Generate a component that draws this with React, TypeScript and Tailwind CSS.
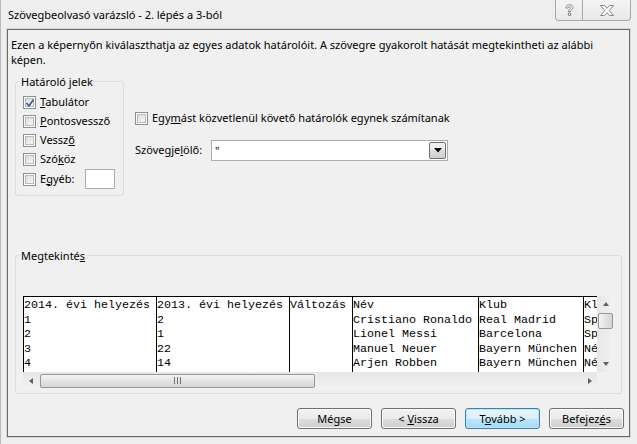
import React from "react";

const cols = [
  { w: "w-[133px]", lines: ["2014. évi helyezés", "1", "2", "3", "4"] },
  { w: "w-[133px]", lines: ["2013. évi helyezés", "2", "1", "22", "14"] },
  { w: "w-[63px]", lines: ["Változás", "", "", "", ""] },
  { w: "w-[126px]", lines: ["Név", "Cristiano Ronaldo", "Lionel Messi", "Manuel Neuer", "Arjen Robben"] },
  { w: "w-[105px]", lines: ["Klub", "Real Madrid", "Barcelona", "Bayern München", "Bayern München"] },
  { w: "w-[14px]", lines: ["Klub országa", "Spanyolország", "Spanyolország", "Németország", "Németország"] },
];

function Box({ checked }: { checked?: boolean }) {
  return (
    <span className="relative flex h-[13px] w-[13px] shrink-0 items-center justify-center border border-[#8e8f8f] bg-white">
      <span className="h-[9px] w-[9px] border border-[#b7bcc3] bg-[linear-gradient(135deg,#d9dde3,#f7f7f7)]" />
      {checked && (
        <svg className="absolute left-[1px] top-[1px]" width="10" height="10" viewBox="0 0 10 10">
          <path d="M1.5 5 L4 7.8 L8.6 1.5" fill="none" stroke="#4a5c8f" strokeWidth="1.7" />
        </svg>
      )}
    </span>
  );
}

function Check({ checked, children }: { checked?: boolean; children: React.ReactNode }) {
  return (
    <div className="flex h-[19px] items-center gap-[4px]">
      <Box checked={checked} />
      <span>{children}</span>
    </div>
  );
}

function Btn({ def, children }: { def?: boolean; children: React.ReactNode }) {
  return (
    <button
      className={
        def
          ? "h-[21px] w-[75px] shrink-0 rounded-[3px] border border-[#3c7fb1] bg-[linear-gradient(#eaf6fd_0%,#d9f0fc_50%,#bee6fd_50%,#a7d9f5_100%)] p-0 leading-[19px] shadow-[inset_0_0_0_1px_#b7e6fc]"
          : "h-[21px] w-[75px] shrink-0 rounded-[3px] border border-[#707070] bg-[linear-gradient(#f2f2f2_0%,#ebebeb_50%,#dddddd_50%,#cfcfcf_100%)] p-0 leading-[19px] shadow-[inset_0_0_0_1px_#fbfbfb]"
      }
    >
      {children}
    </button>
  );
}

function Arrow({ dir }: { dir: "up" | "down" | "left" | "right" }) {
  const d =
    dir === "up" ? "M1 5 L4 1 L7 5 Z" : dir === "down" ? "M1 2 L4 6 L7 2 Z" : dir === "left" ? "M5 1 L1 4 L5 7 Z" : "M3 1 L7 4 L3 7 Z";
  return (
    <svg width="8" height="8" viewBox="0 0 8 8">
      <path d={d} fill="#606060" />
    </svg>
  );
}

export default function App() {
  return (
    <div className="flex h-[444px] w-[637px] flex-col overflow-hidden border-l border-[#b9b9b9] bg-[#eeeeee] font-['Noto_Sans',sans-serif] text-[11px] text-black">
      {/* title bar */}
      <div className="flex h-[29px] shrink-0 items-start justify-between">
        <span className="ml-[7px] mt-[7px] leading-[16px]">Szövegbeolvasó varázsló - 2. lépés a 3-ból</span>
        <div className="mr-[6px] flex">
          <div className="flex h-[21px] w-[28px] items-center justify-center rounded-bl-[4px] border border-t-0 border-[#a8a8a8] bg-[linear-gradient(#f4f4f4,#e9e9e9)]">
            <svg width="9" height="13" viewBox="0 0 9 13">
              <path
                d="M1 4 C1 1.5 2.5 0.8 4.5 0.8 C6.5 0.8 8 1.8 8 3.6 C8 5.4 5.6 5.8 5.6 7.6 L3.4 7.6 C3.4 5.4 5.8 5 5.8 3.8 C5.8 3 5.2 2.6 4.5 2.6 C3.7 2.6 3.2 3.2 3.2 4 Z M3.4 9 L5.6 9 L5.6 11.4 L3.4 11.4 Z"
                fill="#fdfdfd"
                stroke="#7a7a7a"
                strokeWidth="0.9"
              />
            </svg>
          </div>
          <div className="flex h-[21px] w-[48px] items-center justify-center rounded-br-[4px] border border-l-0 border-t-0 border-[#a8a8a8] bg-[linear-gradient(#f4f4f4,#e9e9e9)]">
            <svg width="14" height="11" viewBox="0 0 14 11">
              <path
                d="M0.5 0.5 L4.5 0.5 L7 3.3 L9.5 0.5 L13.5 0.5 L9.2 5.5 L13.5 10.5 L9.5 10.5 L7 7.7 L4.5 10.5 L0.5 10.5 L4.8 5.5 Z"
                fill="#fdfdfd"
                stroke="#7a7a7a"
                strokeWidth="0.9"
              />
            </svg>
          </div>
        </div>
      </div>

      {/* client area */}
      <div className="mx-[6px] flex h-[408px] w-[623px] shrink-0 flex-col border border-[#6b6b6b] bg-[#f0f0f0] shadow-[0_0_0_1px_#d6d6d6]">
        <p className="ml-[3px] mt-[7px] whitespace-nowrap leading-[15px]">
          Ezen a képernyőn kiválaszthatja az egyes adatok határolóit. A szövegre gyakorolt hatását megtekintheti az alábbi
          <br />
          képen.
        </p>

        <div className="mt-[7px] flex">
          <fieldset className="ml-[7px] h-[122px] w-[109px] min-w-0 rounded-[3px] border border-[#d5dfe5] pl-[7px]">
            <legend className="ml-[-3px] px-[1px] leading-[15px]">Határoló jelek</legend>
            <div className="mt-[4px] flex flex-col">
              <Check checked>
                <u>T</u>abulátor
              </Check>
              <Check>
                <u>P</u>ontosvessző
              </Check>
              <Check>
                Vessz<u>ő</u>
              </Check>
              <Check>
                Szó<u>k</u>öz
              </Check>
              <div className="flex h-[20px] items-center">
                <Box />
                <span className="ml-[4px] w-[45px]">
                  E<u>g</u>yéb:
                </span>
                <span className="h-[20px] w-[30px] border border-[#abadb3] bg-white" />
              </div>
            </div>
          </fieldset>

          <div className="ml-[11px] flex flex-col">
            <div className="mt-[35px]">
              <Check>
                Egy<u>m</u>ást közvetlenül követő határolók egynek számítanak
              </Check>
            </div>
            <div className="mt-[12px] flex h-[21px] items-center">
              <span className="w-[76px]">
                Szövegje<u>l</u>ölő:
              </span>
              <div className="flex h-[21px] w-[237px] items-center justify-between border border-[#abadb3] bg-white pl-[3px] pr-[1px]">
                <span className="leading-[15px]">"</span>
                <div className="flex h-[17px] w-[17px] items-center justify-center rounded-[2px] border border-[#707070] bg-[linear-gradient(#f2f2f2_0%,#ebebeb_50%,#dddddd_50%,#cfcfcf_100%)]">
                  <svg width="8" height="5" viewBox="0 0 8 5">
                    <path d="M0 0 L8 0 L4 4.5 Z" fill="#000" />
                  </svg>
                </div>
              </div>
            </div>
          </div>
        </div>

        <fieldset className="ml-[7px] mt-[52px] h-[146px] w-[607px] min-w-0 rounded-[3px] border border-[#d5dfe5] pl-[7px]">
          <legend className="ml-[-3px] px-[1px] leading-[15px]">
            Megtekinté<u>s</u>
          </legend>
          <div className="mt-[33px] flex h-[93px] w-[591px]">
            <div className="flex w-[574px] flex-col">
              <div className="flex h-[76px] overflow-hidden border-t border-black bg-white font-['Liberation_Mono',monospace] text-[11.67px] leading-[14.5px]">
                {cols.map((c, i) => (
                  <div key={i} className={`${c.w} shrink-0 overflow-hidden whitespace-pre border-l border-black pt-[1px]`}>
                    {c.lines.map((l, j) => (
                      <div key={j} className="h-[14.5px]">
                        {l}
                      </div>
                    ))}
                  </div>
                ))}
              </div>
              <div className="flex h-[17px] items-center bg-[linear-gradient(#e6e6e6,#f2f2f2)]">
                <div className="flex w-[17px] justify-center">
                  <Arrow dir="left" />
                </div>
                <div className="flex h-[14px] w-[275px] items-center justify-center rounded-[2px] border border-[#979797] bg-[linear-gradient(#f4f4f4,#e3e3e3_50%,#d6d6d6)]">
                  <svg width="7" height="7" viewBox="0 0 7 7">
                    <path d="M0.5 0 V7 M3.5 0 V7 M6.5 0 V7" stroke="#6f6f6f" strokeWidth="1" />
                  </svg>
                </div>
                <div className="flex-1" />
                <div className="flex w-[17px] justify-center">
                  <Arrow dir="right" />
                </div>
              </div>
            </div>
            <div className="flex w-[17px] flex-col">
              <div className="flex h-[76px] flex-col items-center bg-[linear-gradient(90deg,#e6e6e6,#f2f2f2)]">
                <div className="flex h-[17px] items-center">
                  <Arrow dir="up" />
                </div>
                <div className="h-[16px] w-[15px] rounded-[2px] border border-[#979797] bg-[linear-gradient(90deg,#f4f4f4,#e3e3e3_50%,#d6d6d6)]" />
                <div className="flex-1" />
                <div className="flex h-[17px] items-center">
                  <Arrow dir="down" />
                </div>
              </div>
              <div className="h-[17px] bg-[#f0f0f0]" />
            </div>
          </div>
        </fieldset>

        <div className="mr-[5px] mt-[14px] flex justify-end gap-[9px]">
          <Btn>Mégse</Btn>
          <Btn>
            &lt; <u>V</u>issza
          </Btn>
          <Btn def>
            T<u>o</u>vább &gt;
          </Btn>
          <Btn>
            Befejez<u>é</u>s
          </Btn>
        </div>
      </div>
    </div>
  );
}
